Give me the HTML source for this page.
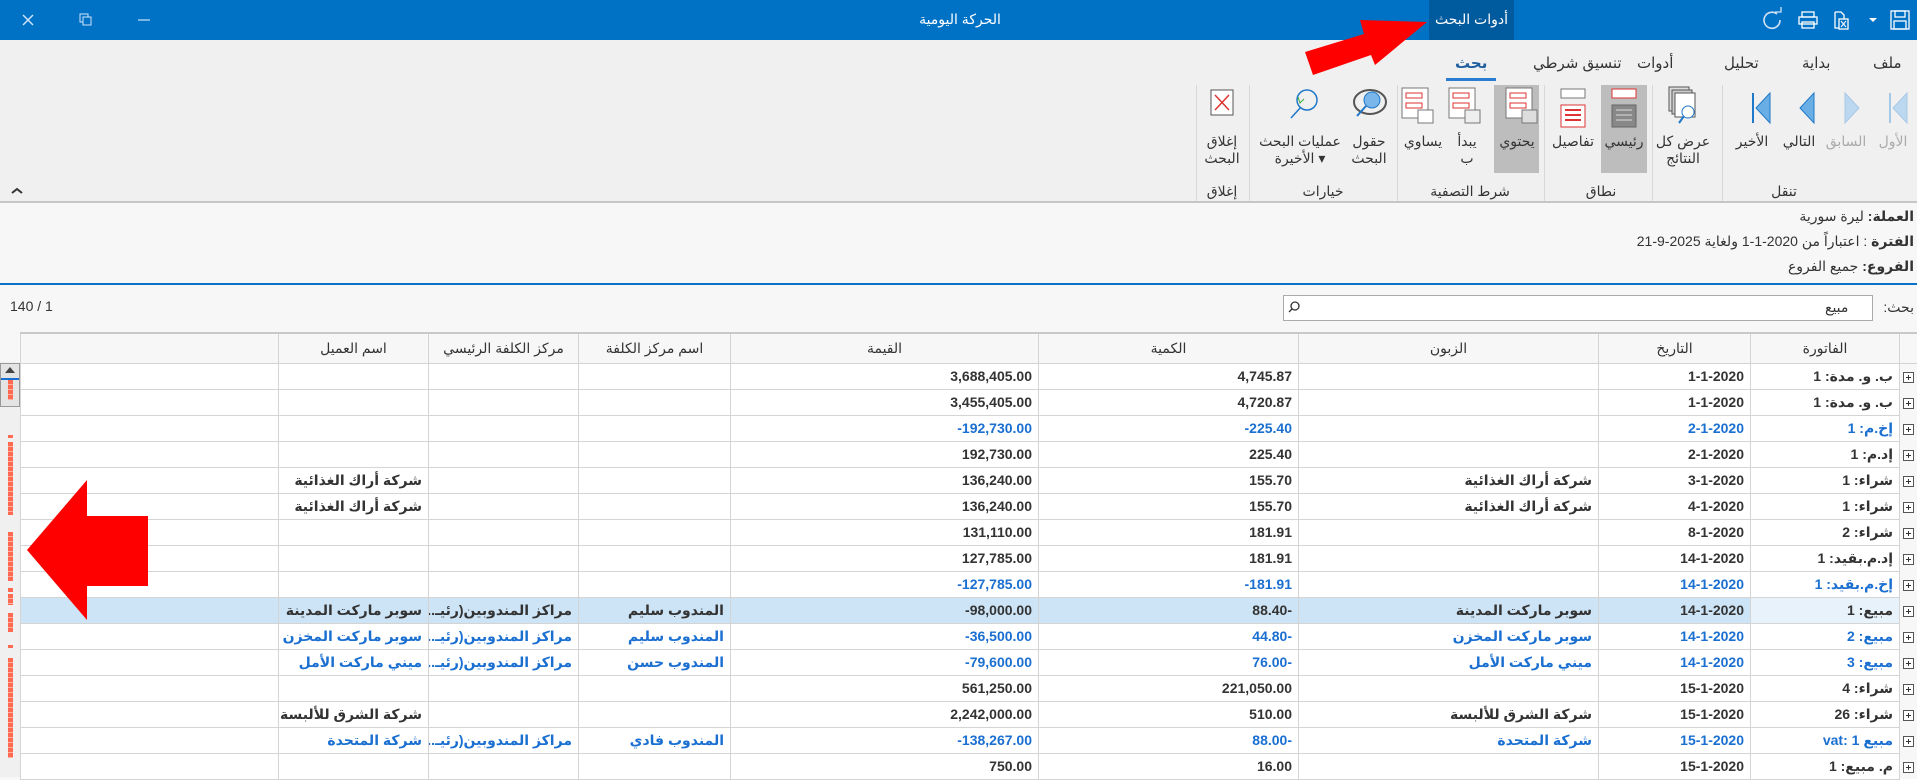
<!DOCTYPE html>
<html><head><meta charset="utf-8">
<style>
*{margin:0;padding:0;box-sizing:border-box}
body{width:1917px;height:777px;overflow:hidden;background:#f7f7f7;font-family:"Liberation Sans","DejaVu Sans",sans-serif;position:relative;color:#333}
.a{position:absolute}
.t{position:absolute;white-space:nowrap;font-size:14px;color:#333}
.lbl{position:absolute;font-size:14px;color:#333;text-align:center;line-height:17px;white-space:nowrap;transform:translateX(-50%)}
.grp{position:absolute;top:183px;font-size:14px;color:#333;transform:translateX(-50%);white-space:nowrap}
.sep{position:absolute;top:85px;width:1px;height:116px;background:#d8d8d8}
table{position:absolute;left:20px;top:332px;width:1897px;border-collapse:collapse;table-layout:fixed;direction:rtl;background:#fff}
td,th{border:1px solid #d4d4d4;height:26px;padding:0 6px;font-size:14px;font-weight:bold;text-align:right;white-space:nowrap;overflow:hidden;color:#333}
th{height:30px;font-weight:normal;text-align:center;background:#f7f7f7;font-size:14px;border-top:2px solid #c8c8c8}
td.x{border:none;border-left:1px solid #d4d4d4;padding:0;text-align:center;background:#f7f7f7}
tr.b td{color:#1a6fd1}
tr.s td{background:#cde4f6}
tr.s td.f{background:#e8f2fb}
tr.s td.x{background:#f7f7f7}
.l{display:inline-block;direction:ltr;unicode-bidi:isolate}
.pl{display:inline-block;width:11px;height:11px;border:1px solid #555;position:relative;vertical-align:middle;background:#fff}
.pl:before{content:"";position:absolute;left:2px;top:4px;width:5px;height:1px;background:#333}
.pl:after{content:"";position:absolute;left:4px;top:2px;width:1px;height:5px;background:#333}
.rm{position:absolute;left:8px;width:5px;background:repeating-linear-gradient(#ff6a50 0 4px,#ffb0a0 4px 5px)}
</style></head><body>
<div class="a" style="left:0;top:0;width:1917px;height:40px;background:#0072c6"></div>
<div class="a" style="left:1429px;top:0;width:85px;height:40px;background:#005a9e"></div>
<div class="t" style="left:1429px;width:85px;top:11px;text-align:center;color:#fff;font-size:14px">أدوات البحث</div>
<div class="t" style="left:860px;width:200px;top:11px;text-align:center;color:#fff">الحركة اليومية</div>
<svg class="a" style="left:0;top:0" width="200" height="40">
<path d="M23 15l10 10M33 15l-10 10" stroke="#cfe3f5" stroke-width="1.5"/>
<rect x="80" y="14" width="8" height="8" fill="none" stroke="#cfe3f5"/><rect x="83" y="17" width="8" height="8" fill="#0072c6" stroke="#cfe3f5"/>
<path d="M138 20h12" stroke="#cfe3f5" stroke-width="1.2"/>
</svg>
<svg class="a" style="left:1755px;top:0" width="162" height="40" fill="none" stroke="#fff" stroke-width="1.3">
<path d="M22 14a8 8 0 1 0 3 6" stroke="#cfe3f5" stroke-width="1.6"/><path d="M20 12h6v-5" stroke="#cfe3f5"/>
<rect x="47" y="12" width="12" height="5"/><rect x="44" y="17" width="18" height="7"/><rect x="47" y="22" width="12" height="6"/>
<path d="M80 12h6l3 3v4M80 12v16h4" /><rect x="84" y="19" width="9" height="10"/><path d="M86 21l5 6M91 21l-5 6" stroke-width="1"/>
<path d="M114 18h8l-4 4z" fill="#fff" stroke="none"/>
<rect x="136" y="11" width="18" height="18"/><rect x="140" y="11" width="10" height="6"/><rect x="139" y="21" width="12" height="8"/>
</svg>
<svg class="a" style="left:0;top:0;z-index:5" width="1917" height="777">
<polygon points="1427,22 1360,20 1364,34 1305,52 1313,75 1371,55 1375,65" fill="#f00"/>
<polygon points="27,550 87,480 87,516 148,516 148,586 87,586 87,620" fill="#f00"/>
</svg>
<div class="a" style="left:0;top:40px;width:1917px;height:163px;background:#f0f0f0;border-bottom:2px solid #c6c6c6;z-index:-1"></div>
<div class="t" style="left:1873px;top:54px;font-size:15px">ملف</div>
<div class="t" style="left:1802px;top:54px;font-size:15px">بداية</div>
<div class="t" style="left:1724px;top:54px;font-size:15px">تحليل</div>
<div class="t" style="left:1637px;top:54px;font-size:15px">أدوات</div>
<div class="t" style="left:1533px;top:54px;font-size:15px">تنسيق شرطي</div>
<div class="t" style="left:1455px;top:54px;font-size:15px;font-weight:bold;color:#1e5f9e">بحث</div>
<div class="a" style="left:1446px;top:78px;width:50px;height:3px;background:#2b7cd3"></div>
<div class="a" style="left:1601px;top:85px;width:46px;height:88px;background:#bdbdbd"></div>
<div class="a" style="left:1494px;top:85px;width:45px;height:88px;background:#bdbdbd"></div>
<div class="sep" style="left:1722px"></div><div class="sep" style="left:1652px"></div><div class="sep" style="left:1544px"></div><div class="sep" style="left:1397px"></div><div class="sep" style="left:1249px"></div><div class="sep" style="left:1196px"></div>
<svg class="a" style="left:1190px;top:85px" width="727" height="50">
<g fill="#bcd8ef" stroke="#a6c8e8"><path d="M700 8v30" stroke-width="2"/><path d="M717 8l-14 15 14 15z"/><path d="M655 8l14 15-14 15z"/></g>
<g fill="#6aaee6" stroke="#1f78c8"><path d="M624 8l-14 15 14 15z"/><path d="M580 8l-14 15 14 15z"/><path d="M563 8v30" stroke-width="2"/></g>
<g fill="#fff" stroke="#555"><rect x="479" y="2" width="20" height="24" fill="#ddd"/><rect x="482" y="5" width="20" height="24" fill="#ccc"/><rect x="485" y="8" width="20" height="24"/><circle cx="498" cy="27" r="6" stroke="#1f78c8"/><path d="M494 31l-5 7" stroke="#1f78c8" stroke-width="2"/></g>
<g stroke="#d33" fill="#fff"><rect x="422" y="4" width="24" height="9"/><rect x="422" y="20" width="24" height="22" fill="#888" stroke="#666"/><path d="M426 25h16M426 30h16M426 35h16" stroke="#ddd"/></g>
<g stroke="#777" fill="#fff"><rect x="371" y="4" width="24" height="9"/><rect x="371" y="20" width="24" height="22" stroke="#d33"/><path d="M375 25h16M375 30h16M375 35h16" stroke="#d33" stroke-width="2"/></g>
<g stroke="#777" fill="#fff"><rect x="316" y="3" width="26" height="30"/><rect x="320" y="8" width="16" height="5" stroke="#d33"/><rect x="320" y="18" width="16" height="5" stroke="#d33"/><rect x="332" y="25" width="15" height="13" fill="#ddd"/></g>
<g stroke="#777" fill="#fff"><rect x="259" y="3" width="26" height="30"/><rect x="263" y="8" width="16" height="5" stroke="#d33"/><rect x="263" y="18" width="16" height="5" stroke="#d33"/><rect x="275" y="25" width="15" height="13" fill="#eee"/></g>
<g stroke="#777" fill="#fff"><rect x="212" y="3" width="26" height="30"/><rect x="216" y="8" width="16" height="5" stroke="#d33"/><rect x="216" y="18" width="16" height="5" stroke="#d33"/><rect x="228" y="25" width="15" height="13"/></g>
<g fill="none" stroke="#555"><ellipse cx="180" cy="17" rx="16" ry="12" stroke-width="2"/><circle cx="182" cy="15" r="8" fill="#7ab6ea" stroke="#1f78c8"/><path d="M176 21l-9 10" stroke="#1f78c8" stroke-width="2"/></g>
<g fill="none"><circle cx="117" cy="15" r="10" stroke="#1f78c8" stroke-width="1.5"/><path d="M111 22l-10 11" stroke="#1f78c8" stroke-width="1.5"/><path d="M108 12l2 6 4-4" stroke="#3a3"/></g>
<g><rect x="21" y="5" width="22" height="25" fill="#fff" stroke="#555"/><path d="M25 10l14 15M39 10l-14 15" stroke="#d33" stroke-width="1.5"/></g>
</svg>
<div class="lbl" style="left:1893px;top:133px;color:#aaa">الأول</div>
<div class="lbl" style="left:1846px;top:133px;color:#aaa">السابق</div>
<div class="lbl" style="left:1799px;top:133px">التالي</div>
<div class="lbl" style="left:1752px;top:133px">الأخير</div>
<div class="lbl" style="left:1683px;top:133px">عرض كل<br>النتائج</div>
<div class="lbl" style="left:1624px;top:133px">رئيسي</div>
<div class="lbl" style="left:1573px;top:133px">تفاصيل</div>
<div class="lbl" style="left:1517px;top:133px">يحتوي</div>
<div class="lbl" style="left:1467px;top:133px">يبدأ<br>ب</div>
<div class="lbl" style="left:1423px;top:133px">يساوي</div>
<div class="lbl" style="left:1369px;top:133px">حقول<br>البحث</div>
<div class="lbl" style="left:1300px;top:133px">عمليات البحث<br>الأخيرة ▾</div>
<div class="lbl" style="left:1222px;top:133px">إغلاق<br>البحث</div>
<div class="grp" style="left:1784px">تنقل</div>
<div class="grp" style="left:1601px">نطاق</div>
<div class="grp" style="left:1470px">شرط التصفية</div>
<div class="grp" style="left:1323px">خيارات</div>
<div class="grp" style="left:1222px">إغلاق</div>
<svg class="a" style="left:10px;top:186px" width="14" height="10"><path d="M2 7l5-4 5 4" stroke="#333" stroke-width="2" fill="none"/></svg>
<div class="t" style="right:3px;top:208px" dir="rtl"><b>العملة:</b> ليرة سورية</div>
<div class="t" style="right:3px;top:233px" dir="rtl"><b>الفترة</b> : اعتباراً من 2020-1-1 ولغاية 2025-9-21</div>
<div class="t" style="right:3px;top:258px" dir="rtl"><b>الفروع:</b> جميع الفروع</div>
<div class="a" style="left:0;top:283px;width:1917px;height:2px;background:#0a73c8"></div>
<div class="t" style="left:10px;top:298px">140 / 1</div>
<div class="t" style="right:3px;top:299px" dir="rtl">بحث:</div>
<div class="a" style="left:1283px;top:295px;width:590px;height:26px;background:#fff;border:1px solid #aaa"></div>
<div class="t" style="left:1825px;top:299px">مبيع</div>
<svg class="a" style="left:1287px;top:300px" width="14" height="14"><circle cx="8" cy="6" r="4" fill="none" stroke="#333" stroke-width="1.3"/><path d="M5 9l-3 3" stroke="#333" stroke-width="1.3"/></svg>
<table>
<colgroup><col style="width:18px"><col style="width:149px"><col style="width:152px"><col style="width:300px"><col style="width:260px"><col style="width:308px"><col style="width:152px"><col style="width:150px"><col style="width:150px"><col style="width:258px"></colgroup>
<tr><th style="border-right:none"></th><th>الفاتورة</th><th>التاريخ</th><th>الزبون</th><th>الكمية</th><th>القيمة</th><th>اسم مركز الكلفة</th><th>مركز الكلفة الرئيسي</th><th>اسم العميل</th><th></th></tr>
<tr><td class="x"><span class="pl"></span></td><td class="f">ب. و. مدة: 1</td><td><span class="l">1-1-2020</span></td><td></td><td>4,745.87</td><td>3,688,405.00</td><td></td><td></td><td></td><td></td></tr>
<tr><td class="x"><span class="pl"></span></td><td class="f">ب. و. مدة: 1</td><td><span class="l">1-1-2020</span></td><td></td><td>4,720.87</td><td>3,455,405.00</td><td></td><td></td><td></td><td></td></tr>
<tr class="b"><td class="x"><span class="pl"></span></td><td class="f">إخ.م: 1</td><td><span class="l">2-1-2020</span></td><td></td><td><span class="l">-225.40</span></td><td><span class="l">-192,730.00</span></td><td></td><td></td><td></td><td></td></tr>
<tr><td class="x"><span class="pl"></span></td><td class="f">إد.م: 1</td><td><span class="l">2-1-2020</span></td><td></td><td>225.40</td><td>192,730.00</td><td></td><td></td><td></td><td></td></tr>
<tr><td class="x"><span class="pl"></span></td><td class="f">شراء: 1</td><td><span class="l">3-1-2020</span></td><td>شركة أراك الغذائية</td><td>155.70</td><td>136,240.00</td><td></td><td></td><td>شركة أراك الغذائية</td><td></td></tr>
<tr><td class="x"><span class="pl"></span></td><td class="f">شراء: 1</td><td><span class="l">4-1-2020</span></td><td>شركة أراك الغذائية</td><td>155.70</td><td>136,240.00</td><td></td><td></td><td>شركة أراك الغذائية</td><td></td></tr>
<tr><td class="x"><span class="pl"></span></td><td class="f">شراء: 2</td><td><span class="l">8-1-2020</span></td><td></td><td>181.91</td><td>131,110.00</td><td></td><td></td><td></td><td></td></tr>
<tr><td class="x"><span class="pl"></span></td><td class="f">إد.م.بقيد: 1</td><td><span class="l">14-1-2020</span></td><td></td><td>181.91</td><td>127,785.00</td><td></td><td></td><td></td><td></td></tr>
<tr class="b"><td class="x"><span class="pl"></span></td><td class="f">إخ.م.بقيد: 1</td><td><span class="l">14-1-2020</span></td><td></td><td><span class="l">-181.91</span></td><td><span class="l">-127,785.00</span></td><td></td><td></td><td></td><td></td></tr>
<tr class="s"><td class="x"><span class="pl"></span></td><td class="f">مبيع: 1</td><td><span class="l">14-1-2020</span></td><td>سوبر ماركت المدينة</td><td><span class="l">88.40-</span></td><td><span class="l">-98,000.00</span></td><td>المندوب سليم</td><td>مراكز المندوبين(رئيـ...</td><td>سوبر ماركت المدينة</td><td></td></tr>
<tr class="b"><td class="x"><span class="pl"></span></td><td class="f">مبيع: 2</td><td><span class="l">14-1-2020</span></td><td>سوبر ماركت المخزن</td><td><span class="l">44.80-</span></td><td><span class="l">-36,500.00</span></td><td>المندوب سليم</td><td>مراكز المندوبين(رئيـ...</td><td>سوبر ماركت المخزن</td><td></td></tr>
<tr class="b"><td class="x"><span class="pl"></span></td><td class="f">مبيع: 3</td><td><span class="l">14-1-2020</span></td><td>ميني ماركت الأمل</td><td><span class="l">76.00-</span></td><td><span class="l">-79,600.00</span></td><td>المندوب حسن</td><td>مراكز المندوبين(رئيـ...</td><td>ميني ماركت الأمل</td><td></td></tr>
<tr><td class="x"><span class="pl"></span></td><td class="f">شراء: 4</td><td><span class="l">15-1-2020</span></td><td></td><td>221,050.00</td><td>561,250.00</td><td></td><td></td><td></td><td></td></tr>
<tr><td class="x"><span class="pl"></span></td><td class="f">شراء: 26</td><td><span class="l">15-1-2020</span></td><td>شركة الشرق للألبسة</td><td>510.00</td><td>2,242,000.00</td><td></td><td></td><td>شركة الشرق للألبسة</td><td></td></tr>
<tr class="b"><td class="x"><span class="pl"></span></td><td class="f">مبيع vat: 1</td><td><span class="l">15-1-2020</span></td><td>شركة المتحدة</td><td><span class="l">88.00-</span></td><td><span class="l">-138,267.00</span></td><td>المندوب فادي</td><td>مراكز المندوبين(رئيـ...</td><td>شركة المتحدة</td><td></td></tr>
<tr><td class="x"><span class="pl"></span></td><td class="f">م. مبيع: 1</td><td><span class="l">15-1-2020</span></td><td></td><td>16.00</td><td>750.00</td><td></td><td></td><td></td><td></td></tr>
</table>
<div class="a" style="left:0;top:362px;width:20px;height:415px;background:#f0f0f0"></div>
<div class="a" style="left:0;top:363px;width:20px;height:44px;background:#e4e4e4;border:1px solid #999"></div>
<svg class="a" style="left:3px;top:365px" width="14" height="10"><path d="M2 8l5-6 5 6z" fill="#444"/></svg>
<div class="a" style="left:1px;top:378px;width:18px;height:2px;background:#1a6fd1"></div>
<div class="rm" style="top:380px;height:20px"></div>
<div class="rm" style="top:435px;height:3px"></div>
<div class="rm" style="top:442px;height:73px"></div>
<div class="rm" style="top:532px;height:49px"></div>
<div class="rm" style="top:588px;height:4px"></div>
<div class="rm" style="top:594px;height:11px"></div>
<div class="rm" style="top:613px;height:19px"></div>
<div class="rm" style="top:645px;height:3px"></div>
<div class="rm" style="top:658px;height:100px"></div>
</body></html>
